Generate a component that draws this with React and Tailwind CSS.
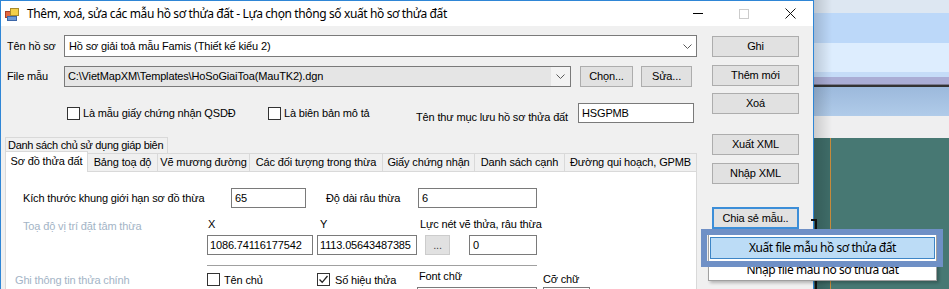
import React from "react";

function Chevron() {
  return (
    <svg width="9" height="5" viewBox="0 0 9 5">
      <polyline points="0.5,0.5 4.5,4.5 8.5,0.5" fill="none" stroke="#5a5a5a" strokeWidth="1" />
    </svg>
  );
}

function AppIcon() {
  return (
    <svg width="14" height="13" viewBox="0 0 14 13">
      <rect x="0.5" y="3.5" width="6" height="6" fill="#e4683f" stroke="#a8402a" strokeWidth="1" />
      <rect x="5.5" y="0.5" width="8" height="7" fill="#f3d04a" stroke="#a88a2a" strokeWidth="1" />
      <rect x="2.5" y="8.5" width="9" height="4" fill="#6c9ad8" stroke="#3b66a8" strokeWidth="1" />
    </svg>
  );
}

function Check({ checked }) {
  return (
    <div className="w-[13px] h-[13px] border border-[#333333] bg-white flex items-center justify-center shrink-0">
      {checked ? (
        <svg width="11" height="11" viewBox="0 0 11 11">
          <polyline points="1.5,5.5 4.2,8.3 9.5,2" fill="none" stroke="#222" strokeWidth="1.3" />
        </svg>
      ) : null}
    </div>
  );
}

export default function App() {
  return (
    <div className="relative flex w-[949px] h-[289px] overflow-hidden whitespace-nowrap bg-[#f0f0f0] font-['Liberation_Sans',Arial,sans-serif] text-[11px] tracking-[-0.15px] text-black leading-none">
      {/* Window */}
      <div className="flex flex-col w-[814px] h-full shrink-0 border-l border-r border-t border-[#2f86d6] bg-[#f0f0f0]">
        {/* Title bar */}
        <div className="flex items-center h-[25px] bg-white shrink-0">
          <div className="ml-[4px] mt-[1px] w-[14px] h-[13px] flex">
            <AppIcon />
          </div>
          <div className="ml-[8px] font-['Noto_Sans',sans-serif] text-[12px] tracking-[-0.38px] text-black">
            Thêm, xoá, sửa các mẫu hồ sơ thửa đất - Lựa chọn thông số xuất hồ sơ thửa đất
          </div>
          <div className="ml-auto flex h-full">
            <div className="w-[46px] h-full flex items-center justify-center">
              <div className="w-[10px] h-[1px] bg-black" />
            </div>
            <div className="w-[46px] h-full flex items-center justify-center">
              <div className="w-[10px] h-[10px] border border-[#cccccc]" />
            </div>
            <div className="w-[46px] h-full flex items-center justify-center">
              <svg width="11" height="11" viewBox="0 0 11 11">
                <line x1="0.5" y1="0.5" x2="10.5" y2="10.5" stroke="#111" strokeWidth="1" />
                <line x1="10.5" y1="0.5" x2="0.5" y2="10.5" stroke="#111" strokeWidth="1" />
              </svg>
            </div>
          </div>
        </div>

        {/* Client */}
        <div className="flex flex-1 min-h-0">
          {/* Left column */}
          <div className="flex flex-col w-[705px] shrink-0">
            {/* Row 1 */}
            <div className="flex items-center mt-[9px] h-[22px]">
              <div className="ml-[6px] w-[57px]">Tên hồ sơ</div>
              <div className="flex items-center w-[633px] h-[22px] border border-[#7a7a7a] bg-white">
                <div className="flex-1 pl-[4px]">Hồ sơ giải toả mẫu Famis (Thiết kế kiểu 2)</div>
                <div className="w-[17px] flex justify-center">
                  <Chevron />
                </div>
              </div>
            </div>
            {/* Row 2 */}
            <div className="flex items-center mt-[9px] h-[21px]">
              <div className="ml-[6px] w-[57px]">File mẫu</div>
              <div className="flex w-[507px] h-[21px] border border-[#7a7a7a] bg-[#f3f3f3]">
                <div className="flex items-center flex-1 bg-[#e5e5e5] pl-[3px]">
                  C:\VietMapXM\Templates\HoSoGiaiToa(MauTK2).dgn
                </div>
                <div className="w-[19px] flex items-center justify-center">
                  <Chevron />
                </div>
              </div>
              <div className="ml-[9px] w-[53px] h-[21px] flex items-center justify-center bg-[#e1e1e1] border border-[#adadad]">
                Chọn...
              </div>
              <div className="ml-[8px] w-[51px] h-[21px] flex items-center justify-center bg-[#e1e1e1] border border-[#adadad]">
                Sửa...
              </div>
            </div>
            {/* Row 3 */}
            <div className="flex items-start mt-[16px] h-[20px] ml-[66px]">
              <div className="mt-[4px]">
                <Check />
              </div>
              <div className="ml-[3px] w-[185px] mt-[4px] leading-[13px]">Là mẫu giấy chứng nhận QSDĐ</div>
              <div className="mt-[4px]">
                <Check />
              </div>
              <div className="ml-[3px] w-[132px] mt-[4px] leading-[13px]">Là biên bản mô tả</div>
              <div className="w-[162px] mt-[8px] leading-[13px]">Tên thư mục lưu hồ sơ thửa đất</div>
              <div className="w-[116px] h-[20px] flex items-center pl-[3px] border border-[#7a7a7a] bg-white">HSGPMB</div>
            </div>

            {/* Tabs row 1 */}
            <div className="flex mt-[14px] ml-[4px] h-[16px]">
              <div className="w-[163px] h-[16px] flex items-center pl-[2px] border border-b-0 border-[#d9d9d9] bg-[#f0f0f0] tracking-[-0.3px]">
                Danh sách chủ sử dụng giáp biên
              </div>
            </div>
            {/* Tabs row 2 */}
            <div className="flex items-start ml-[4px] h-[18px]">
              <div className="relative z-10 -mt-[2px] w-[83px] h-[21px] flex items-center justify-center pb-[1px] border border-b-0 border-[#d9d9d9] bg-white">
                Sơ đồ thửa đất
              </div>
              <div className="w-[70px] h-[18px] flex items-center justify-center border-t border-r border-[#d9d9d9] bg-[#f0f0f0]">
                Bảng toạ độ
              </div>
              <div className="w-[92px] h-[18px] flex items-center justify-center border-t border-r border-[#d9d9d9] bg-[#f0f0f0]">
                Vẽ mương đường
              </div>
              <div className="w-[133px] h-[18px] flex items-center justify-center border-t border-r border-[#d9d9d9] bg-[#f0f0f0]">
                Các đối tượng trong thừa
              </div>
              <div className="w-[92px] h-[18px] flex items-center justify-center border-t border-r border-[#d9d9d9] bg-[#f0f0f0]">
                Giấy chứng nhận
              </div>
              <div className="w-[90px] h-[18px] flex items-center justify-center border-t border-r border-[#d9d9d9] bg-[#f0f0f0]">
                Danh sách cạnh
              </div>
              <div className="w-[132px] h-[18px] flex items-center justify-center border-t border-r border-[#d9d9d9] bg-[#f0f0f0]">
                Đường qui hoạch, GPMB
              </div>
            </div>
            {/* Tab panel */}
            <div className="flex flex-col ml-[4px] w-[692px] flex-1 min-h-0 overflow-hidden bg-white border border-b-0 border-[#d9d9d9]">
              {/* Row A */}
              <div className="flex items-center mt-[16px] h-[20px] shrink-0">
                <div className="ml-[17px] w-[208px]">Kích thước khung giới hạn sơ đồ thừa</div>
                <div className="w-[75px] h-[20px] flex items-center pl-[3px] border border-[#7a7a7a]">65</div>
                <div className="ml-[20px] w-[92px]">Độ dài râu thừa</div>
                <div className="w-[119px] h-[20px] flex items-center pl-[3px] border border-[#7a7a7a]">6</div>
              </div>
              {/* Row B */}
              <div className="flex items-start mt-[9px] h-[14px] shrink-0 leading-[14px]">
                <div className="ml-[17px] w-[185px] mt-[2px] text-[#a3b4c6]">Toạ độ vị trí đặt tâm thừa</div>
                <div className="w-[112px]">X</div>
                <div className="w-[100px]">Y</div>
                <div>Lực nét vẽ thửa, râu thừa</div>
              </div>
              {/* Row C */}
              <div className="flex items-center mt-[4px] h-[20px] shrink-0">
                <div className="ml-[201px] w-[106px] h-[20px] flex items-center pl-[2px] border border-[#7a7a7a] overflow-hidden">1086.74116177542</div>
                <div className="ml-[4px] w-[100px] h-[20px] flex items-center pl-[2px] border border-[#7a7a7a] overflow-hidden">1113.05643487385</div>
                <div className="ml-[8px] w-[25px] h-[20px] flex items-center justify-center bg-[#e1e1e1] border border-[#cccccc] text-[#444]">...</div>
                <div className="ml-[19px] w-[68px] h-[20px] flex items-center pl-[3px] border border-[#7a7a7a]">0</div>
              </div>
              {/* Separator */}
              <div className="mt-[10px] ml-[201px] w-[330px] h-[1px] bg-[#a0a0a0] shrink-0" />
              {/* Row D */}
              <div className="flex items-start mt-[7px] h-[14px] shrink-0 leading-[14px]">
                <div className="ml-[9px] w-[192px] text-[#a3b4c6]">Ghi thông tin thửa chính</div>
                <Check />
                <div className="ml-[4px] w-[93px]">Tên chủ</div>
                <Check checked />
                <div className="ml-[5px] w-[84px]">Số hiệu thửa</div>
                <div className="w-[124px] -mt-[4px]">Font chữ</div>
                <div className="-mt-[1px]">Cỡ chữ</div>
              </div>
              {/* Row E */}
              <div className="flex h-[20px] shrink-0">
                <div className="ml-[411px] w-[120px] h-[20px] border border-[#7a7a7a]" />
                <div className="ml-[6px] w-[47px] h-[20px] border border-[#7a7a7a]" />
              </div>
            </div>
          </div>

          {/* Right column buttons */}
          <div className="flex flex-col pl-[6px]">
            <div className="mt-[10px] w-[87px] h-[21px] flex items-center justify-center bg-[#e1e1e1] border border-[#adadad]">Ghi</div>
            <div className="mt-[8px] w-[87px] h-[21px] flex items-center justify-center bg-[#e1e1e1] border border-[#adadad]">Thêm mới</div>
            <div className="mt-[7px] w-[87px] h-[21px] flex items-center justify-center bg-[#e1e1e1] border border-[#adadad]">Xoá</div>
            <div className="mt-[20px] w-[87px] h-[21px] flex items-center justify-center bg-[#e1e1e1] border border-[#adadad]">Xuất XML</div>
            <div className="mt-[8px] w-[87px] h-[21px] flex items-center justify-center bg-[#e1e1e1] border border-[#adadad]">Nhập XML</div>
            <div className="mt-[23px] w-[87px] h-[22px] flex items-center justify-center bg-[#e1e1e1] border-2 border-[#3c8ed8]">Chia sẻ mẫu..</div>
          </div>
        </div>
      </div>

      {/* Desktop behind */}
      <div className="flex flex-col flex-1 h-full">
        <div className="h-[13px] bg-[#dde7f2]" />
        <div className="h-[30px] bg-[#bcd8f9]" />
        <div className="h-[29px] bg-[#ddedfe]" />
        <div className="h-[5px] bg-[#c5dcf8]" />
        <div className="h-[7px] bg-[#aaadd5]" />
        <div className="h-[1px] bg-[#7a7a90]" />
        <div className="h-[2px] bg-[#333333]" />
        <div className="h-[29px] bg-gradient-to-b from-[#9cb9dc] to-[#b0cbe9]" />
        <div className="h-[22px] bg-[#efeff0]" />
        <div className="flex flex-1">
          <div className="w-[16px] h-full bg-[#3f6d69]" />
          <div className="w-[1px] h-full bg-[#c98c3c]" />
          <div className="flex-1 h-full bg-[#477873]" />
        </div>
      </div>

      {/* window shadow on desktop */}
      <div className="absolute left-[814px] top-0 w-[18px] h-full bg-gradient-to-r from-black/15 to-transparent" />

      {/* small bracket line */}
      <div className="absolute left-[811px] top-[219px] w-[6px] h-[2px] bg-[#111]" />
      <div className="absolute left-[815px] top-[219px] w-[2px] h-[70px] bg-[#111]" />

      {/* Context menu */}
      <div className="absolute left-[708px] top-[233px] w-[229px] h-[48px] flex flex-col pt-[3px] bg-white border border-[#a0a0a0] shadow-[2px_2px_3px_rgba(0,0,0,0.25)] font-['Noto_Sans',sans-serif] text-[12px] tracking-[-0.45px]">
        <div className="mx-[1px] h-[22px] flex items-center justify-center bg-[#bcdcf6] border border-[#3d85c6]">
          Xuất file mẫu hồ sơ thửa đất
        </div>
        <div className="h-[21px] flex items-center justify-center">Nhập file mẫu hồ sơ thửa đất</div>
      </div>

      {/* Highlight frame annotation */}
      <div className="absolute left-[701px] top-[229px] w-[242px] h-[38px] border-[6px] border-[#6f90c6]" />
    </div>
  );
}
